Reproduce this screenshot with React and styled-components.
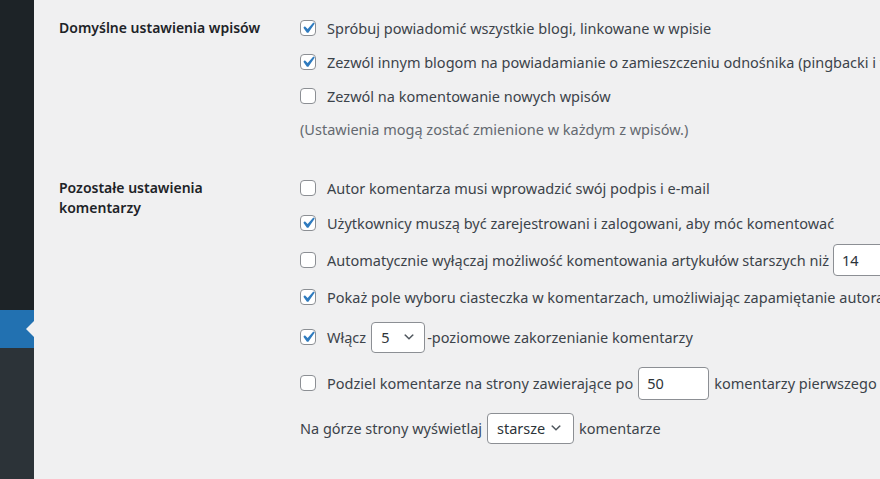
import React from 'react';
import styled, { createGlobalStyle } from 'styled-components';

const Global = createGlobalStyle`
  html, body { margin: 0; padding: 0; background: #f0f0f1; }
  body {
    font-family: "Noto Sans", "Open Sans", sans-serif;
    font-size: 14px;
    color: #3c434a;
    overflow: hidden;
  }
`;

const Layout = styled.div`
  display: flex;
  width: 880px;
  height: 479px;
  overflow: hidden;
`;

const Sidebar = styled.nav`
  width: 34px;
  flex: none;
  display: flex;
  flex-direction: column;
  background: #1d2327;
`;

const SideBlock = styled.div`
  height: 310px;
  flex: none;
`;

const SideCurrent = styled.div`
  height: 38px;
  flex: none;
  background: #2271b1;
  position: relative;
  &::after {
    content: "";
    position: absolute;
    right: 0;
    top: 50%;
    margin-top: -8px;
    border: 8px solid transparent;
    border-right-color: #f0f0f1;
    border-left-width: 0;
  }
`;

const SideSub = styled.div`
  flex: 1;
  background: #2c3338;
`;

const Main = styled.main`
  flex: 1;
  min-width: 0;
  padding: 11px 0 0 25px;
  overflow: hidden;
`;

const Section = styled.section`
  display: grid;
  grid-template-columns: 241px 1fr;
  margin-bottom: ${(p) => p.$gap || 0}px;
`;

const Heading = styled.h3`
  margin: 0;
  padding-top: 7px;
  max-width: 205px;
  font-size: 14px;
  line-height: 20px;
  font-weight: 600;
  color: #1d2327;
`;

const Fields = styled.div`
  display: flex;
  flex-direction: column;
  min-width: 0;
`;

const Row = styled.div`
  display: flex;
  align-items: center;
  height: ${(p) => p.$h}px;
  white-space: nowrap;
  line-height: 20px;
  font-size: 14.5px;
`;

const Box = styled.span`
  width: 16px;
  height: 16px;
  flex: none;
  box-sizing: border-box;
  border: 1px solid #8c8f94;
  border-radius: 4px;
  background: #fff;
  display: flex;
  align-items: center;
  justify-content: center;
  margin-right: 11px;
  overflow: visible;
`;

const Text = styled.span`
  color: ${(p) => (p.$muted ? '#646970' : '#3c434a')};
`;

const Field = styled.span`
  box-sizing: border-box;
  display: inline-flex;
  align-items: center;
  height: ${(p) => p.$h || 32}px;
  width: ${(p) => p.$w}px;
  flex: none;
  padding: 0 0 0 ${(p) => p.$pad || 8}px;
  margin: 0 ${(p) => p.$mr || 0}px 0 ${(p) => p.$ml || 0}px;
  border: 1px solid #8c8f94;
  border-radius: 4px;
  background: #fff;
  color: #2c3338;
  font-size: 14.5px;
  position: relative;
`;

const SelectBox = styled(Field)`
  padding-right: 28px;
`;

const Chevron = styled.svg`
  position: absolute;
  right: ${(p) => p.$r}px;
  top: 50%;
  margin-top: -7px;
  width: 14px;
  height: 14px;
`;

function CheckBox({ checked }) {
  return (
    <Box>
      {checked && (
        <svg width="22" height="22" viewBox="0 0 20 20" aria-hidden="true" style={{ flex: 'none', margin: '-3px' }}>
          <path d="M14.83 4.89l1.34.94-5.81 8.38H9.02L5.78 9.67l1.34-1.25 2.57 2.4z" fill="#2f7bbf" />
        </svg>
      )}
    </Box>
  );
}

function Select({ value, w, r, ml, mr }) {
  return (
    <SelectBox $w={w} $pad={9} $h={31} $ml={ml} $mr={mr}>
      {value}
      <Chevron $r={r} viewBox="0 0 20 20" aria-hidden="true">
        <path d="M5 6l5 5 5-5 2 1-7 7-7-7 2-1z" fill="#50575e" />
      </Chevron>
    </SelectBox>
  );
}

export default function App() {
  return (
    <>
      <Global />
      <Layout>
        <Sidebar>
          <SideBlock />
          <SideCurrent />
          <SideSub />
        </Sidebar>
        <Main>
          <Section $gap={26}>
            <Heading>Domyślne ustawienia wpisów</Heading>
            <Fields>
              <Row $h={34}>
                <CheckBox checked />
                <Text>Spróbuj powiadomić wszystkie blogi, linkowane w wpisie</Text>
              </Row>
              <Row $h={34}>
                <CheckBox checked />
                <Text>Zezwól innym blogom na powiadamianie o zamieszczeniu odnośnika (pingbacki i trackbacki) w nowych wpisach</Text>
              </Row>
              <Row $h={34}>
                <CheckBox />
                <Text>Zezwól na komentowanie nowych wpisów</Text>
              </Row>
              <Row $h={32}>
                <Text $muted>(Ustawienia mogą zostać zmienione w każdym z wpisów.)</Text>
              </Row>
            </Fields>
          </Section>
          <Section>
            <Heading>Pozostałe ustawienia komentarzy</Heading>
            <Fields>
              <Row $h={34}>
                <CheckBox />
                <Text>Autor komentarza musi wprowadzić swój podpis i e-mail</Text>
              </Row>
              <Row $h={35}>
                <CheckBox checked />
                <Text>Użytkownicy muszą być zarejestrowani i zalogowani, aby móc komentować</Text>
              </Row>
              <Row $h={40}>
                <CheckBox />
                <Text>Automatycznie wyłączaj możliwość komentowania artykułów starszych niż</Text>
                <Field $w={80} $ml={4} $mr={4}>14</Field>
                <Text>dni</Text>
              </Row>
              <Row $h={34}>
                <CheckBox checked />
                <Text>Pokaż pole wyboru ciasteczka w komentarzach, umożliwiając zapamiętanie autora komentarza</Text>
              </Row>
              <Row $h={46}>
                <CheckBox checked />
                <Text>Włącz</Text>
                <Select value="5" w={54} r={8} ml={5} mr={2} />
                <Text>-poziomowe zakorzenianie komentarzy</Text>
              </Row>
              <Row $h={46}>
                <CheckBox />
                <Text>Podziel komentarze na strony zawierające po</Text>
                <Field $w={71} $ml={5} $mr={5} $h={33}>50</Field>
                <Text>komentarzy pierwszego poziomu każda i domyślnie wyświetlaj</Text>
              </Row>
              <Row $h={44}>
                <Text>Na górze strony wyświetlaj</Text>
                <Select value="starsze" w={87} r={10} ml={5} mr={5} />
                <Text>komentarze</Text>
              </Row>
            </Fields>
          </Section>
        </Main>
      </Layout>
    </>
  );
}
